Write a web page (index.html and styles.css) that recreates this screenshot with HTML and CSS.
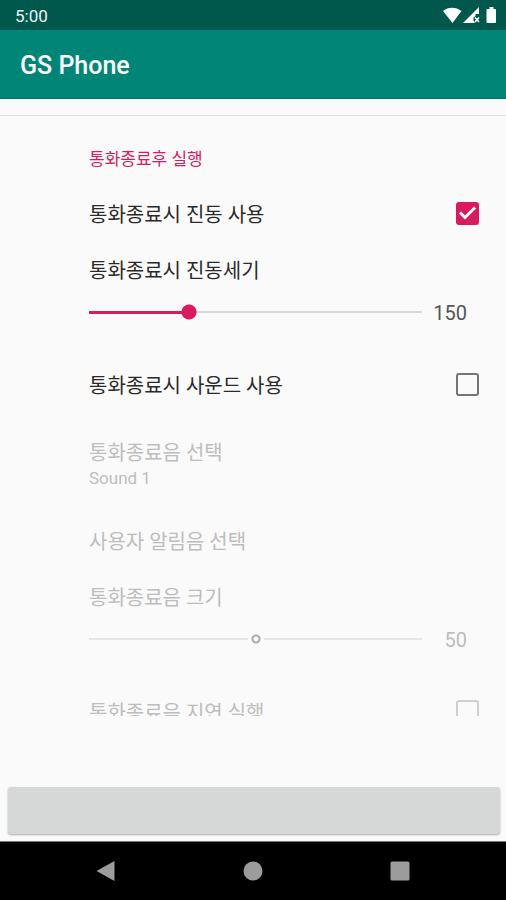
FILE: index.html
```html
<!DOCTYPE html>
<html lang="ko">
<head>
<meta charset="utf-8">
<meta name="viewport" content="width=device-width, initial-scale=1">
<title>GS Phone</title>
<link rel="stylesheet" href="styles.css">
</head>
<body>
<div class="status">
  <span>5:00</span>
  <svg class="status-icons" width="56" height="18" viewBox="0 0 56 18" aria-hidden="true">
    <path fill="#fff" d="M1 4C6-.5 14-.5 19.500 4L10.500 16z"/>
    <path fill="#fff" fill-rule="evenodd" d="M21 16L37 0v7h-3.500v2l-2 1.500v3l1.500 2.500z"/>
    <path fill="none" stroke="#fff" stroke-width="1.500" d="M33 10.500l4 4.500M37 10.500l-4 4.500"/>
    <path fill="#fff" d="M47.500 0h4v2H53q1 0 1 1v12q0 1-1 1h-7.500q-1 0-1-1V3q0-1 1-1h2z"/>
  </svg>
</div>
<header class="appbar"><h1>GS Phone</h1></header>
<div class="strip"></div>
<main class="settings">
  <h2 class="category">통화종료후 실행</h2>
  <div class="row">
    <label for="vibrate">통화종료시 진동 사용</label>
    <input class="check" id="vibrate" type="checkbox" checked>
  </div>
  <div class="slider-row">
    <label for="strength">통화종료시 진동세기</label>
    <div class="slider-line">
      <input class="slider" id="strength" type="range" min="0" max="500" value="150">
      <output for="strength">150</output>
    </div>
  </div>
  <div class="row">
    <label for="sound">통화종료시 사운드 사용</label>
    <input class="check" id="sound" type="checkbox">
  </div>
  <div class="row tall disabled">
    <div>
      <div>통화종료음 선택</div>
      <div class="summary">Sound 1</div>
    </div>
  </div>
  <div class="row disabled"><div>사용자 알림음 선택</div></div>
  <div class="slider-row disabled">
    <label for="volume">통화종료음 크기</label>
    <div class="slider-line">
      <input class="slider" id="volume" type="range" min="0" max="100" value="50" disabled>
      <output for="volume">50</output>
    </div>
  </div>
  <div class="row disabled">
    <label for="delay">통화종료음 지연 실행</label>
    <input class="check" id="delay" type="checkbox" disabled>
  </div>
</main>
<div class="action"><button type="button" class="action-button" aria-label="GS Phone"></button></div>
<nav class="navbar">
  <button type="button" aria-label="Back"><svg width="20" height="22" viewBox="0 0 20 22"><path d="M18.500 1v20L.5 11z"/></svg></button>
  <button type="button" aria-label="Home"><svg width="20" height="20" viewBox="0 0 20 20"><circle cx="10" cy="10" r="9.500"/></svg></button>
  <button type="button" aria-label="Recent"><svg width="20" height="20" viewBox="0 0 20 20"><rect x=".5" y=".5" width="19" height="19" rx="1.500"/></svg></button>
</nav>
</body>
</html>
```
FILE: styles.css
```css
* { box-sizing: border-box; }

body {
  margin: 0;
  height: 100vh;
  display: flex;
  flex-direction: column;
  background: #fafafa;
  color: #2a2a2a;
  font: 20px/28px Roboto, "Noto Sans CJK KR", sans-serif;
}

.status {
  flex: none;
  height: 30px;
  padding: 2px 8px 0 15px;
  display: flex;
  align-items: center;
  justify-content: space-between;
  background: #00574b;
  color: #eef5f4;
  font-size: 17px;
}

.status-icons { display: block; }

.appbar {
  flex: none;
  height: 69px;
  padding: 4px 20px 0;
  display: flex;
  align-items: center;
  background: #008577;
  border-bottom: 1px solid #007468;
  color: #fff;
}

.appbar h1 {
  margin: 0;
  font-size: 25px;
  font-weight: 500;
}

.strip {
  flex: none;
  height: 17px;
  border-bottom: 1px solid #dedede;
}

.settings {
  flex: 1;
  min-height: 0;
  overflow: hidden;
}

.category {
  margin: 0;
  padding: 29px 27px 12px 89px;
  color: #d81b60;
  font-size: 17px;
  font-weight: 400;
}

.row {
  min-height: 56px;
  padding: 0 27px 0 89px;
  display: flex;
  align-items: center;
  justify-content: space-between;
}

.row > label,
.row > div { padding-top: 3px; }

.row.tall { min-height: 100px; }

.summary {
  font-size: 17px;
  line-height: 22px;
}

.disabled { color: #bdbdbd; }

.slider-row { padding: 16px 39px 22px 89px; }

.slider-row label { display: block; }

.slider-line {
  height: 44px;
  margin: 5px 0 0 -8px;
  display: flex;
  align-items: center;
}

.slider-line output {
  width: 37px;
  padding-top: 2px;
  text-align: right;
  color: #555;
}

.disabled output { color: #bdbdbd; }

.slider {
  -webkit-appearance: none;
  appearance: none;
  flex: 1;
  min-width: 0;
  height: 16px;
  margin: 0;
  background:
    linear-gradient(#d81b60, #d81b60) 8px center / 30% 3px no-repeat,
    linear-gradient(#d8d8d8, #d8d8d8) center / calc(100% - 16px) 2px no-repeat;
}

.slider::-webkit-slider-thumb {
  -webkit-appearance: none;
  width: 16px;
  height: 16px;
  background: radial-gradient(circle, #d81b60 7px, transparent 8px);
}

.slider:disabled {
  background: linear-gradient(#e6e6e6, #e6e6e6) center / calc(100% - 16px) 2px no-repeat;
}

.slider:disabled::-webkit-slider-thumb {
  background: radial-gradient(circle, #fafafa 2px, #aaa 3px, #aaa 4px, #fafafa 5px);
}

.check {
  -webkit-appearance: none;
  appearance: none;
  flex: none;
  width: 23px;
  height: 23px;
  margin: 0;
  display: grid;
  place-items: center;
  border: 2px solid #757575;
  border-radius: 3px;
}

.check:checked {
  background: #d81b60;
  border-color: #d81b60;
}

.check:checked::before {
  content: "";
  width: 19px;
  height: 15px;
  background: #fff;
  clip-path: polygon(1px 8px, 3px 6px, 7px 10px, 16px 1px, 18px 3px, 7px 14px);
}

.check:disabled { border-color: #cfcfcf; }

.action {
  flex: none;
  padding: 71px 6px 7px 8px;
}

.action-button {
  display: block;
  width: 100%;
  height: 47px;
  border: 0;
  border-radius: 3px;
  background: #d6d8d7;
  box-shadow: 0 1px 2px #aaa;
}

.navbar {
  flex: none;
  height: 59px;
  padding: 0 33px;
  display: flex;
  background: #000;
  border-top: 1px solid #777;
}

.navbar button {
  flex: 1;
  padding: 0;
  display: grid;
  place-items: center;
  border: 0;
  background: none;
}

.navbar svg { fill: #9c9c9c; }
```
